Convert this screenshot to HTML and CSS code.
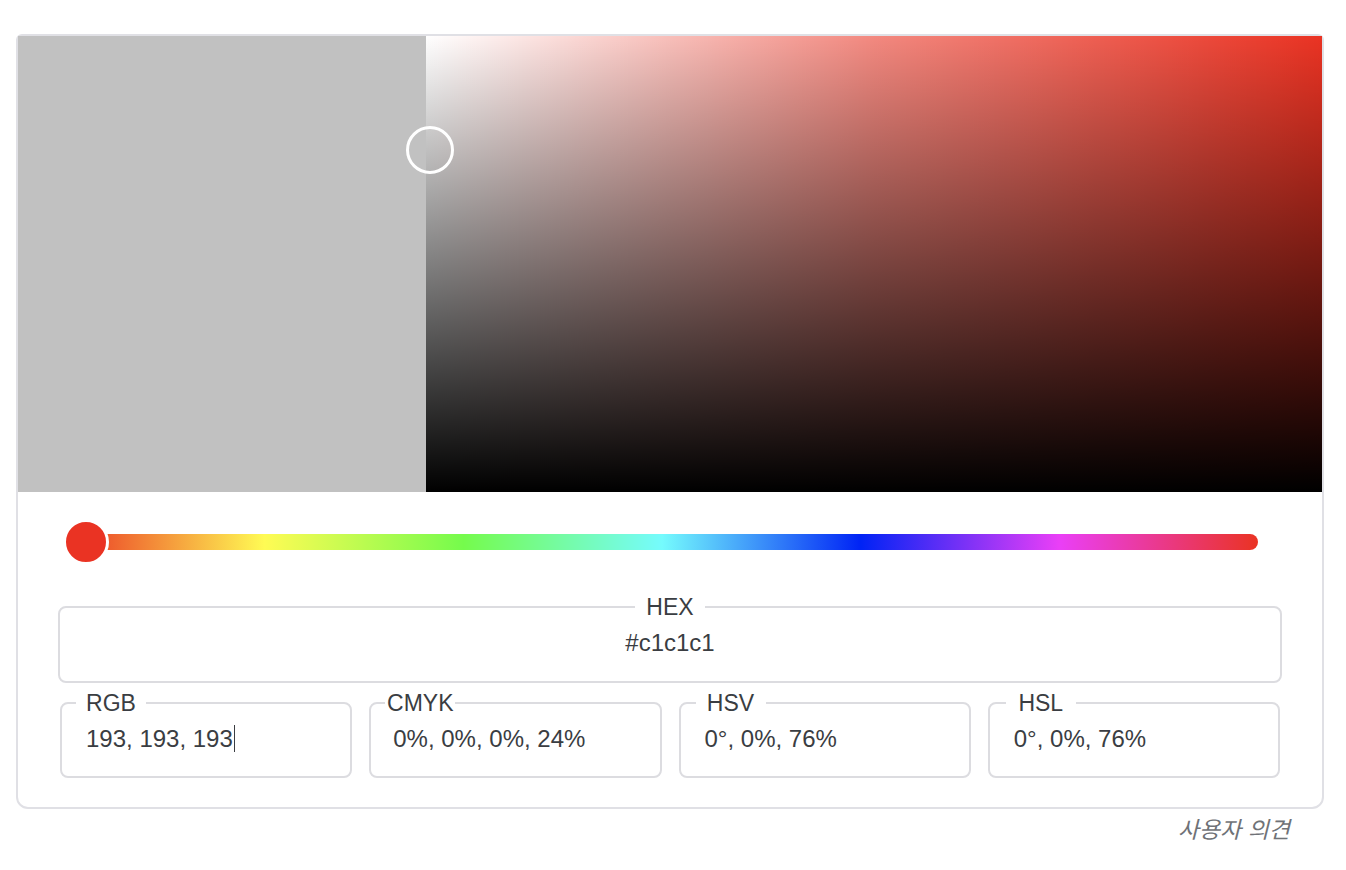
FILE: index.html
```html
<!DOCTYPE html>
<html lang="ko">
<head>
<meta charset="utf-8">
<title>Color Picker</title>
<link rel="stylesheet" href="styles.css">
</head>
<body>
<div class="page">
  <div class="card">
    <div class="picker">
      <div class="swatch"></div>
      <div class="sat">
        <div class="sat-handle"></div>
      </div>
    </div>
    <div class="hue">
      <div class="hue-track"></div>
      <div class="hue-thumb"></div>
    </div>
    <fieldset class="field field-hex">
      <legend class="legend legend-center"><span class="legend-text">HEX</span></legend>
      <div class="value value-center">#c1c1c1</div>
    </fieldset>
    <div class="row">
      <fieldset class="field">
        <legend class="legend"><span class="legend-text">RGB</span></legend>
        <div class="value value-row">193, 193, 193<span class="caret"></span></div>
      </fieldset>
      <fieldset class="field">
        <legend class="legend"><span class="legend-text">CMYK</span></legend>
        <div class="value value-row value-cmyk">0%, 0%, 0%, 24%</div>
      </fieldset>
      <fieldset class="field">
        <legend class="legend legend-hsv"><span class="legend-text">HSV</span></legend>
        <div class="value value-row">0°, 0%, 76%</div>
      </fieldset>
      <fieldset class="field">
        <legend class="legend legend-hsl"><span class="legend-text">HSL</span></legend>
        <div class="value value-row">0°, 0%, 76%</div>
      </fieldset>
    </div>
  </div>
  <div class="feedback">사용자 의견</div>
</div>
</body>
</html>
```
FILE: styles.css
```css
html, body {
  margin: 0;
  padding: 0;
  background: #ffffff;
}

body {
  font-family: "Liberation Sans", Arial, "Noto Sans CJK KR", sans-serif;
  color: #3a3d42;
}

.page {
  padding: 34px 0 0 16px;
  width: 1308px;
}

.card {
  width: 1308px;
  box-sizing: border-box;
  border: 2px solid #e0e0e5;
  border-radius: 6px 6px 12px 12px;
  padding-bottom: 29px;
  background: #fff;
}

.picker {
  display: flex;
  height: 456px;
}

.swatch {
  width: 408px;
  background: #c1c1c1;
}

.sat {
  flex: 1;
  position: relative;
  background:
    linear-gradient(to top, #000000, rgba(0, 0, 0, 0)),
    linear-gradient(to right, #ffffff, rgba(255, 255, 255, 0.42) 50%, rgba(255, 255, 255, 0)),
    #ea3323;
}

.sat-handle {
  position: absolute;
  left: 4px;
  top: 114px;
  width: 48px;
  height: 48px;
  box-sizing: border-box;
  border: 3px solid #ffffff;
  border-radius: 50%;
  transform: translate(-50%, -50%);
}

.hue {
  position: relative;
  height: 46px;
  margin: 27px 64px 0 48px;
  display: flex;
  align-items: center;
}

.hue-track {
  flex: 1;
  height: 16px;
  border-radius: 8px;
  background: linear-gradient(to right,
    #ea3323 0%,
    #fffb54 16.667%,
    #75fb4c 33.333%,
    #75fbfd 50%,
    #0023f5 66.667%,
    #ea3ff7 83.333%,
    #ea3323 100%);
}

.hue-thumb {
  position: absolute;
  left: -3px;
  top: 0;
  width: 46px;
  height: 46px;
  box-sizing: border-box;
  border: 3px solid #ffffff;
  border-radius: 50%;
  background: #ea3323;
}

.field {
  margin: 0;
  padding: 0 14px;
  border: 2px solid #dcdce0;
  border-radius: 8px;
  min-width: 0;
}

.field-hex {
  margin: 29px 40px 0 40px;
}

.legend {
  width: 70px;
  padding: 0;
  font-size: 23px;
  line-height: 26px;
  text-align: left;
  white-space: nowrap;
}

.legend-text {
  display: block;
  text-align: center;
}

.legend-center {
  text-align: center;
}

.legend-hsv {
  margin-left: 1px;
}

.legend-hsl {
  margin-left: 2px;
}

.value {
  font-size: 24px;
  line-height: 46px;
  padding: 0 0 15px 10px;
  white-space: nowrap;
}

.value-row {
  padding-bottom: 14px;
}

.value-center {
  text-align: center;
  padding-left: 0;
}

.value-cmyk {
  padding-left: 8px;
}

.caret {
  display: inline-block;
  width: 1.5px;
  height: 27px;
  background: #3a3d42;
  vertical-align: -5px;
  margin-left: 1px;
}

.row {
  display: grid;
  grid-template-columns: repeat(4, 1fr);
  column-gap: 17px;
  margin: 7px 42px 0 42px;
}

.feedback {
  text-align: right;
  padding: 5px 34px 0 0;
  font-family: "Noto Sans CJK KR", sans-serif;
  font-style: italic;
  font-size: 23px;
  line-height: 28px;
  color: #6f7277;
}
```
